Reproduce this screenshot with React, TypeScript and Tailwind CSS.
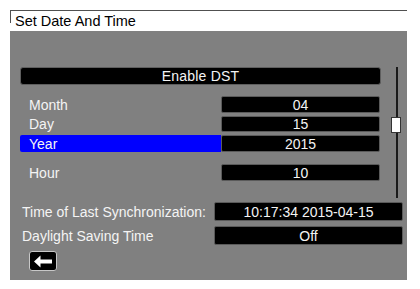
import React from 'react';

const font = { fontFamily: '"Liberation Sans", Arial, sans-serif' };

interface RowProps {
  label: string;
  value: string;
  selected?: boolean;
  className?: string;
}

const Row: React.FC<RowProps> = ({ label, value, selected, className }) => (
  <div className={`flex h-[17px] ${className ?? ''}`}>
    <div
      className={`w-[201px] flex items-center pl-[9px] rounded-l-[2px] ${
        selected ? 'bg-[#0000ff]' : ''
      }`}
    >
      <span>{label}</span>
    </div>
    <div className="w-[159px] bg-black rounded-[2px] border border-[#5a5a5a] flex items-center justify-center">
      {value}
    </div>
  </div>
);

export default function App() {
  return (
    <div className="w-[420px] h-[289px] bg-white relative overflow-hidden" style={font}>
      <div className="ml-[10px] mt-[10px] w-[397px] border-t border-[#505050] relative">
        <div className="absolute left-0 top-0 w-px h-[12px] bg-[#505050]" />
        <div className="h-[20px] flex items-center pl-[5px] text-[14.5px] text-black leading-none">
          Set Date And Time
        </div>
        <div className="h-[249px] bg-[#808080] relative text-[14px] text-[#f4f4f4] leading-none pt-[36px] pl-[10px]">
          <div className="w-[361px] h-[18px] bg-black rounded-[3px] border border-[#5e5e5e] flex items-center justify-center tracking-[0.2px]">
            Enable DST
          </div>

          <div className="mt-[11px] flex flex-col gap-[3px]">
            <Row label="Month" value="04" />
            <Row label="Day" value="15" className="!h-[16px]" />
            <Row label="Year" value="2015" selected />
          </div>
          <Row label="Hour" value="10" className="mt-[12px]" />

          <div className="mt-[21px] flex items-center h-[19px]">
            <div className="w-[194px] pl-[2px]">Time of Last Synchronization:</div>
            <div className="w-[189px] h-[19px] bg-black rounded-[2px] border border-[#5a5a5a] flex items-center justify-center">
              10:17:34 2015-04-15
            </div>
          </div>
          <div className="mt-[5px] flex items-center h-[19px]">
            <div className="w-[194px] pl-[2px]">Daylight Saving Time</div>
            <div className="w-[189px] h-[19px] bg-black rounded-[2px] border border-[#5a5a5a] flex items-center justify-center">
              Off
            </div>
          </div>

          <div className="mt-[6px] ml-[9px] w-[28px] h-[20px] bg-black rounded-[3px] border border-[#c8c8c8] flex items-center justify-center">
            <svg width="20" height="13" viewBox="0 0 20 13">
              <path d="M1 6.5 L7.5 0.5 L7.5 4.5 L19 4.5 L19 8.5 L7.5 8.5 L7.5 12.5 Z" fill="white" />
            </svg>
          </div>

          {/* scrollbar */}
          <div className="absolute left-[386px] top-[36px] w-[2px] h-[131px] bg-[#1a1a1a]" />
          <div className="absolute left-[381px] top-[86px] w-[10px] h-[16px] bg-white border border-[#333]" />
        </div>
      </div>
    </div>
  );
}
